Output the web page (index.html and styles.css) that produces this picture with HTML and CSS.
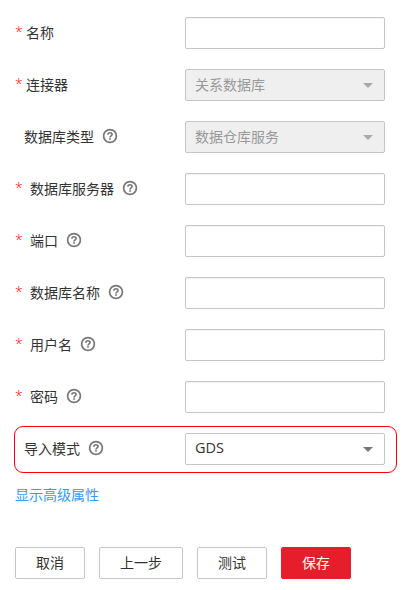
FILE: index.html
```html
<!DOCTYPE html>
<html lang="zh-CN">
<head>
<meta charset="utf-8">
<title>创建连接</title>
<link rel="stylesheet" href="styles.css">
</head>
<body>
<svg class="defs" width="0" height="0">
  <symbol id="help" viewBox="0 0 16 16">
    <circle cx="8" cy="8" r="6.4" fill="none" stroke="currentColor" stroke-width="1.7"/>
    <path d="M5.9 6.7C5.9 5.3 6.8 4.7 8 4.7s2.1.7 2.1 1.8c0 1.4-2.1 1.4-2.1 3" fill="none" stroke="currentColor" stroke-width="1.6"/>
    <path d="M7.1 10.2h1.8v1.6H7.1z" fill="currentColor"/>
  </symbol>
</svg>
<form class="form">
  <div class="row">
    <div class="label"><span class="star">*</span><span class="text">名称</span></div>
    <div class="field"></div>
  </div>
  <div class="row">
    <div class="label"><span class="star">*</span><span class="text">连接器</span></div>
    <div class="field disabled"><span class="text">关系数据库</span><i class="caret"></i></div>
  </div>
  <div class="row">
    <div class="label optional"><span class="text">数据库类型</span><svg class="help"><use href="#help"/></svg></div>
    <div class="field disabled"><span class="text">数据仓库服务</span><i class="caret"></i></div>
  </div>
  <div class="row">
    <div class="label wide"><span class="star">*</span><span class="text">数据库服务器</span><svg class="help"><use href="#help"/></svg></div>
    <div class="field"></div>
  </div>
  <div class="row">
    <div class="label wide"><span class="star">*</span><span class="text">端口</span><svg class="help"><use href="#help"/></svg></div>
    <div class="field"></div>
  </div>
  <div class="row">
    <div class="label wide"><span class="star">*</span><span class="text">数据库名称</span><svg class="help"><use href="#help"/></svg></div>
    <div class="field"></div>
  </div>
  <div class="row">
    <div class="label wide"><span class="star">*</span><span class="text">用户名</span><svg class="help"><use href="#help"/></svg></div>
    <div class="field"></div>
  </div>
  <div class="row">
    <div class="label wide"><span class="star">*</span><span class="text">密码</span><svg class="help"><use href="#help"/></svg></div>
    <div class="field"></div>
  </div>
  <div class="row highlight">
    <div class="label optional"><span class="text">导入模式</span><svg class="help"><use href="#help"/></svg></div>
    <div class="field select"><span class="text latin">GDS</span><i class="caret"></i></div>
  </div>
  <a class="advanced">显示高级属性</a>
  <div class="actions">
    <button type="button" class="btn">取消</button>
    <button type="button" class="btn">上一步</button>
    <button type="button" class="btn">测试</button>
    <button type="button" class="btn primary">保存</button>
  </div>
</form>
</body>
</html>
```
FILE: styles.css
```css
* { box-sizing: border-box; }

body {
  margin: 0;
  background: #fff;
  color: #333;
  font: 14px/20px "Noto Sans CJK SC", sans-serif;
}

.defs { display: block; }

.form { padding: 17px 0 0 15px; }

.row {
  display: flex;
  align-items: center;
  height: 32px;
  margin-bottom: 20px;
}

.label {
  display: flex;
  align-items: center;
  width: 170px;
  flex: none;
}

.label.optional { padding-left: 9px; }

.text { padding-bottom: 2px; }

.star {
  width: 11px;
  padding-bottom: 2px;
  color: #f00;
  font-family: "Open Sans", sans-serif;
  font-weight: 300;
}

.wide .star { width: 15px; }

.help {
  width: 16px;
  height: 16px;
  margin: -2px 0 0 8px;
  color: #777;
}

.field {
  display: flex;
  align-items: center;
  justify-content: space-between;
  width: 200px;
  height: 32px;
  padding: 0 11px 0 9px;
  border: 1px solid #c6c6c6;
  border-radius: 2px;
  box-shadow: inset 0 1px 1px #f3f3f3;
}

.field.disabled {
  background: #efefef;
  color: #999;
  box-shadow: none;
}

.field.select { box-shadow: none; }

.latin {
  font-family: "Open Sans", "Noto Sans", sans-serif;
  font-size: 14.5px;
}

.caret {
  border: 5px solid transparent;
  border-top-color: #777;
  border-bottom: 0;
}

.disabled .caret { border-top-color: #aaa; }

.highlight {
  align-items: flex-start;
  width: 383px;
  height: 47px;
  margin: -7px 0 12px -1px;
  padding-top: 6px;
  border: 1px solid #f00;
  border-radius: 9px;
}

.highlight .label { height: 32px; }

.advanced {
  display: block;
  margin-top: -1px;
  color: #39f;
}

.actions {
  display: flex;
  gap: 14px;
  margin-top: 43px;
}

.btn {
  height: 32px;
  padding: 0 20px 2px;
  border: 1px solid #c6c6c6;
  border-radius: 2px;
  background: #fff;
  color: #333;
  font: inherit;
}

.btn.primary {
  border-color: #e61e2b;
  background: #e61e2b;
  color: #fff;
}
```
